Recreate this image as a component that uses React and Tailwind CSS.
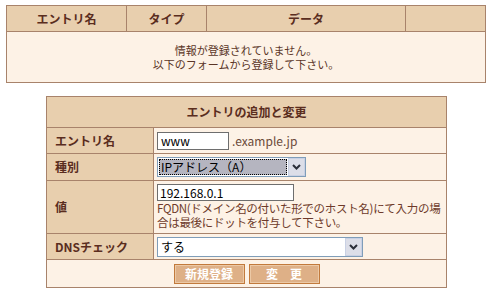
import React from "react";

const font = { fontFamily: '"Noto Sans CJK JP", "Noto Sans", sans-serif' };

// small dark chevron used in the fake select boxes
function Chevron() {
  return (
    <svg width="9" height="6" viewBox="0 0 9 6">
      <path d="M1 1 L4.5 4.5 L8 1" fill="none" stroke="#2b2f3a" strokeWidth="2" />
    </svg>
  );
}

function FakeSelect({ width, value, focused }) {
  return (
    <div className={`flex h-[20px] border border-[#7f9db9] bg-white ${width}`}>
      <div className="flex-1 p-px">
        <div
          className={`flex h-full items-center pl-[2px] text-[12px] leading-none text-black ${
            focused ? "bg-[#b5b5c0] outline outline-1 outline-dotted outline-black -outline-offset-1" : ""
          }`}
        >
          {value}
        </div>
      </div>
      <div className="flex w-[17px] items-center justify-center border border-[#c9d1e4] bg-[#dcdee8]">
        <Chevron />
      </div>
    </div>
  );
}

export default function App() {
  return (
    <div className="min-h-[302px] w-[490px] bg-white pt-[5px]" style={font}>
      {/* entry list */}
      <div className="ml-[6px] w-[480px] border border-[#a8836b]">
        <div className="flex h-[26px] border-b border-[#a8836b] bg-[#e8cfae] text-[12px] font-bold text-[#5a2d1e]">
          <div className="flex w-[119px] items-center justify-center">エントリ名</div>
          <div className="flex w-[80px] items-center justify-center border-l border-[#a8836b]">タイプ</div>
          <div className="flex w-[199px] items-center justify-center border-l border-[#a8836b]">データ</div>
          <div className="w-[80px] border-l border-[#a8836b]"></div>
        </div>
        <div className="flex h-[50px] flex-col items-center justify-center bg-[#fdf2e6] text-[11px] leading-[14px] text-[#5a3526]">
          <p>情報が登録されていません。</p>
          <p>以下のフォームから登録して下さい。</p>
        </div>
      </div>

      {/* add / edit form */}
      <div className="ml-[46px] mt-[13px] w-[401px] border border-[#a8836b] text-[12px]">
        <div className="flex h-[31px] items-center justify-center border-b border-[#a8836b] bg-[#e8cfae] font-bold text-[#5a2d1e]">
          エントリの追加と変更
        </div>

        <div className="flex h-[26px] border-b border-[#a8836b]">
          <div className="flex w-[107px] items-center border-r border-[#a8836b] bg-[#e8cfae] pl-[8px] font-bold text-[#5a2d1e]">
            エントリ名
          </div>
          <div className="flex flex-1 items-center bg-[#fdf2e6] pl-[3px]">
            <div className="flex h-[18px] w-[72px] items-center border border-[#6e6e6e] bg-white pl-[3px] text-[12px] text-black">
              www
            </div>
            <span className="ml-[3px] text-[#6b4a3a]">.example.jp</span>
          </div>
        </div>

        <div className="flex h-[27px] border-b border-[#a8836b]">
          <div className="flex w-[107px] items-center border-r border-[#a8836b] bg-[#e8cfae] pl-[8px] font-bold text-[#5a2d1e]">
            種別
          </div>
          <div className="flex flex-1 items-center bg-[#fdf2e6] pl-[3px]">
            <FakeSelect width="w-[149px]" value="IPアドレス（A）" focused />
          </div>
        </div>

        <div className="flex h-[53px] border-b border-[#a8836b]">
          <div className="flex w-[107px] items-center border-r border-[#a8836b] bg-[#e8cfae] pl-[8px] font-bold text-[#5a2d1e]">
            値
          </div>
          <div className="flex-1 bg-[#fdf2e6] pl-[3px] pt-[3px]">
            <div className="flex h-[17px] w-[137px] items-center border border-[#6e6e6e] bg-white pl-[2px] text-[12px] text-black">
              192.168.0.1
            </div>
            <p className="text-[11.5px] leading-[14px] tracking-[-0.3px] text-[#6e3a2a]">
              FQDN(ドメイン名の付いた形でのホスト名)にて入力の場
              <br />
              合は最後にドットを付与して下さい。
            </p>
          </div>
        </div>

        <div className="flex h-[26px] border-b border-[#a8836b]">
          <div className="flex w-[107px] items-center border-r border-[#a8836b] bg-[#e8cfae] pl-[8px] font-bold text-[#5a2d1e]">
            DNSチェック
          </div>
          <div className="flex flex-1 items-center bg-[#fdf2e6] pl-[3px]">
            <FakeSelect width="w-[206px]" value="する" />
          </div>
        </div>

        <div className="flex h-[27px] items-center justify-center gap-[4px] bg-[#fdf2e6]">
          <button className="h-[20px] w-[71px] border border-[#c27a3c] bg-[#deb087] text-[12px] font-bold text-white shadow-[inset_0_0_0_1px_#ecc9a6]">
            新規登録
          </button>
          <button className="h-[20px] w-[71px] border border-[#c27a3c] bg-[#deb087] text-[12px] font-bold text-white shadow-[inset_0_0_0_1px_#ecc9a6]">
            変　更
          </button>
        </div>
      </div>
    </div>
  );
}
